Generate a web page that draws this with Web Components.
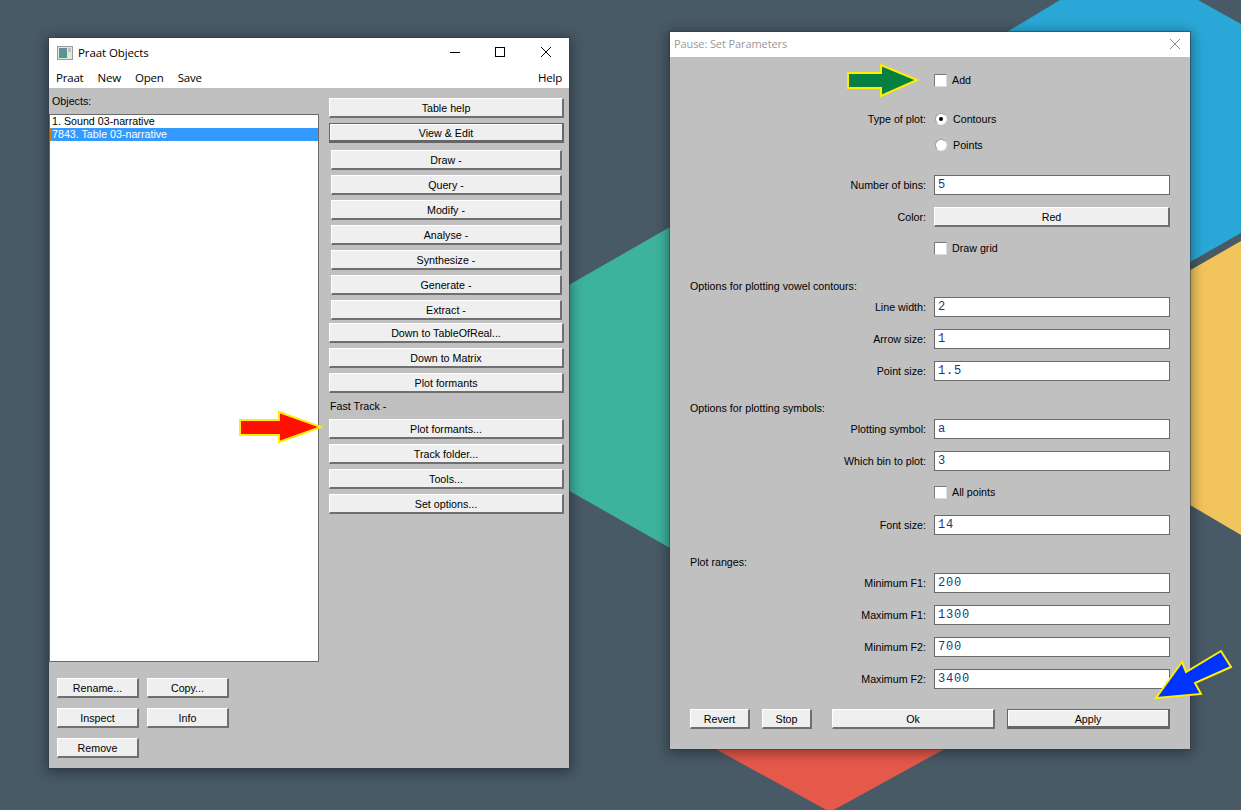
<!DOCTYPE html>
<html>
<head>
<meta charset="utf-8">
<title>Praat</title>
<style>
  html, body { margin: 0; padding: 0; background: #485a66; }
  body { font: 10.7px "Liberation Sans", Arial, sans-serif; color: #000; }
  .win-left { left: 49px; top: 38px; width: 520px; height: 730px; }
  .win-right { left: 670px; top: 32px; width: 520px; height: 717px; }
  .arrow-red { left: 238px; top: 410px; }
  .arrow-green { left: 846px; top: 63px; }
  .arrow-blue { left: 1154px; top: 649px; }
</style>
</head>
<body>
<praat-desktop>
  <praat-window class="win-left" heading="Praat Objects" controls>
    <svg slot="icon" width="16" height="14" viewBox="0 0 16 14">
      <rect x="0.5" y="0.5" width="15" height="13" fill="#e4e4e4" stroke="#9a9a9a"/>
      <rect x="2" y="2" width="8" height="10" fill="#4e9a8c"/>
      <rect x="2" y="2" width="8" height="4" fill="#6f8aa0"/>
      <rect x="11" y="2" width="3" height="4" fill="#b8c8c0"/>
    </svg>
    <praat-menu slot="menu">
      <span>Praat</span><span>New</span><span>Open</span><span>Save</span>
      <span slot="end">Help</span>
    </praat-menu>
    <praat-objects></praat-objects>
  </praat-window>

  <praat-window class="win-right" heading="Pause: Set Parameters" inactive>
    <praat-form></praat-form>
  </praat-window>

  <praat-arrow class="arrow-red" width="85" height="34" fill="#ff1000" points="2,10 41,10 41,2 83,17 41,32 41,25 2,25"></praat-arrow>
  <praat-arrow class="arrow-green" width="73" height="35" fill="#058040" points="2,10 35,10 35,2 71,17 35,33 35,25 2,25"></praat-arrow>
  <praat-arrow class="arrow-blue" width="79" height="51" fill="#0033ff" points="2,49 28,13 32,23 67,2 77,18 41,34 47,45"></praat-arrow>
</praat-desktop>

<script>
'use strict';

(function() {
  const buttonCss = `
    :host {
      display: block;
      height: 20px;
      box-sizing: border-box;
      font: 10.7px "Liberation Sans", Arial, sans-serif;
      color: #000;
    }
    .face {
      box-sizing: border-box;
      height: 100%;
      display: flex;
      align-items: center;
      justify-content: center;
      background: #efefef;
      border-top: 1px solid #fff;
      border-left: 1px solid #fff;
      border-right: 2px solid #6f6f6f;
      border-bottom: 2px solid #6f6f6f;
      padding-top: 1px;
    }
    :host([default]) .face {
      border: 1px solid #666;
      border-right-width: 2px;
      border-bottom-width: 3px;
      box-shadow: inset 1px 1px 0 #fff;
    }
  `;

  class PraatButton extends HTMLElement {
    constructor() {
      super();
      const shadow = this.attachShadow({ mode: 'open' });
      shadow.innerHTML = `<style>${buttonCss}</style><div class="face"><slot></slot></div>`;
    }
  }

  class PraatDesktop extends HTMLElement {
    constructor() {
      super();
      const shadow = this.attachShadow({ mode: 'open' });
      shadow.innerHTML = `
        <style>
          :host {
            display: block;
            position: relative;
            width: 1241px;
            height: 810px;
            overflow: hidden;
            background: #485a66;
          }
          svg { position: absolute; left: 0; top: 0; }
        </style>
        <svg width="1241" height="810" viewBox="0 0 1241 810">
          <polygon fill="#3db39e" points="520,313 670,227 800,227 800,548 670,548 520,463"/>
          <polygon fill="#29a8d8" points="1060,0 1198,0 1241,24 1241,233 1190,262 950,262 950,66"/>
          <polygon fill="#f2c55c" points="1100,322 1241,241 1241,535 1190,505 1100,505"/>
          <polygon fill="#e5594b" points="690,735 830,812 970,735"/>
        </svg>
        <slot></slot>
      `;
    }
  }

  class PraatWindow extends HTMLElement {
    constructor() {
      super();
      const shadow = this.attachShadow({ mode: 'open' });
      const heading = this.getAttribute('heading') || '';
      const controls = this.hasAttribute('controls');
      shadow.innerHTML = `
        <style>
          :host {
            display: flex;
            flex-direction: column;
            position: absolute;
            background: #c0c0c0;
            box-shadow: 0 0 0 1px rgba(50,60,70,.55), 0 2px 12px 2px rgba(0,0,0,.4);
          }
          .top { background: #fff; flex: none; }
          .title {
            display: flex;
            align-items: center;
            height: 30px;
            padding-left: 8px;
            font: 11.5px "Open Sans", sans-serif;
            letter-spacing: -.1px;
            color: #000;
          }
          .heading { flex: 1; padding-bottom: 2px; }
          :host([inactive]) .title {
            height: 25px;
            padding-left: 4px;
            color: #999;
            font-size: 11px;
          }
          ::slotted([slot=icon]) { margin-right: 5px; }
          .caption { display: flex; }
          .caption svg { display: block; }
          .body { flex: 1; min-height: 0; }
        </style>
        <div class="top">
          <div class="title">
            <slot name="icon"></slot>
            <span class="heading">${heading}</span>
            <div class="caption">
              ${controls ? `
              <svg width="46" height="30" viewBox="0 0 46 30"><path d="M2 14.5h10" stroke="#000" fill="none"/></svg>
              <svg width="46" height="30" viewBox="0 0 46 30"><rect x="1.5" y="9.5" width="9" height="9" stroke="#000" fill="none"/></svg>
              <svg width="29" height="30" viewBox="0 0 29 30"><path d="M1 9l10 10M11 9L1 19" stroke="#000" fill="none"/></svg>
              ` : `
              <svg width="20" height="25" viewBox="0 0 20 25"><path d="M0 7l10 10M10 7L0 17" stroke="#8c8c8c" fill="none"/></svg>
              `}
            </div>
          </div>
          <slot name="menu"></slot>
        </div>
        <div class="body"><slot></slot></div>
      `;
    }
  }

  class PraatMenu extends HTMLElement {
    constructor() {
      super();
      const shadow = this.attachShadow({ mode: 'open' });
      shadow.innerHTML = `
        <style>
          :host {
            display: flex;
            justify-content: space-between;
            height: 18px;
            padding: 0 7px 2px;
            align-items: center;
            font: 11.5px "Open Sans", sans-serif;
            letter-spacing: -.2px;
            color: #000;
          }
          .items { display: flex; gap: 14px; }
        </style>
        <div class="items"><slot></slot></div>
        <slot name="end"></slot>
      `;
    }
  }

  class PraatObjects extends HTMLElement {
    constructor() {
      super();
      const shadow = this.attachShadow({ mode: 'open' });
      const upper = ['Draw -', 'Query -', 'Modify -', 'Analyse -', 'Synthesize -', 'Generate -', 'Extract -'];
      shadow.innerHTML = `
        <style>
          :host {
            display: grid;
            grid-template-columns: 270px 235px;
            column-gap: 10px;
            height: 100%;
          }
          .left { display: flex; flex-direction: column; }
          .caption { height: 26px; line-height: 26px; padding-left: 3px; }
          .list {
            box-sizing: border-box;
            height: 548px;
            background: #fff;
            border: 1px solid #6a6a6a;
          }
          .row { height: 13px; line-height: 13px; padding-left: 2px; white-space: nowrap; }
          .row.sel {
            box-sizing: border-box;
            background: #3399ff;
            color: #fff;
            border: 1px dotted #e07b10;
            line-height: 11px;
            padding-left: 1px;
          }
          .bottom {
            display: grid;
            grid-template-columns: 82px 82px;
            gap: 10px 8px;
            margin: 16px 0 0 8px;
          }
          .right { display: flex; flex-direction: column; padding-top: 10px; }
          .right praat-button { margin-top: 5px; }
          .right praat-button:first-child { margin-top: 0; }
          .inset { margin-left: 2px; margin-right: 2px; }
          .right praat-button.gap7 { margin-top: 7px; }
          .right praat-button.gap3 { margin-top: 3px; }
          .label { height: 26px; line-height: 26px; padding-left: 1px; }
          .right praat-button.after-label { margin-top: 0; }
        </style>
        <div class="left">
          <div class="caption">Objects:</div>
          <div class="list">
            <div class="row">1. Sound 03-narrative</div>
            <div class="row sel">7843. Table 03-narrative</div>
          </div>
          <div class="bottom">
            <praat-button>Rename...</praat-button>
            <praat-button>Copy...</praat-button>
            <praat-button>Inspect</praat-button>
            <praat-button>Info</praat-button>
            <praat-button>Remove</praat-button>
          </div>
        </div>
        <div class="right">
          <praat-button>Table help</praat-button>
          <praat-button default>View &amp; Edit</praat-button>
          ${upper.map((item, index) => `
          <praat-button class="inset ${index == 0 ? 'gap7' : ''}">${item}</praat-button>
          `).join('')}
          <praat-button class="gap3">Down to TableOfReal...</praat-button>
          <praat-button>Down to Matrix</praat-button>
          <praat-button>Plot formants</praat-button>
          <div class="label">Fast Track -</div>
          <praat-button class="after-label">Plot formants...</praat-button>
          <praat-button>Track folder...</praat-button>
          <praat-button>Tools...</praat-button>
          <praat-button>Set options...</praat-button>
        </div>
      `;
    }
  }

  class PraatRow extends HTMLElement {
    constructor() {
      super();
      const shadow = this.attachShadow({ mode: 'open' });
      shadow.innerHTML = `
        <style>
          :host {
            display: grid;
            grid-template-columns: 236px 236px;
            column-gap: 8px;
            align-items: center;
            height: 20px;
          }
          .label { text-align: right; }
        </style>
        <div class="label">${this.getAttribute('label') || ''}</div>
        <div><slot></slot></div>
      `;
    }
  }

  class PraatText extends HTMLElement {
    constructor() {
      super();
      const shadow = this.attachShadow({ mode: 'open' });
      shadow.innerHTML = `
        <style>
          :host {
            display: block;
            box-sizing: border-box;
            height: 20px;
            padding-left: 3px;
            background: #fff;
            border: 1px solid #6a6a6a;
            font: 12px/19px "Liberation Mono", "Courier New", monospace;
            letter-spacing: .8px;
            color: #123a80;
          }
        </style>
        <slot></slot>
      `;
    }
  }

  class PraatToggle extends HTMLElement {
    constructor() {
      super();
      const shadow = this.attachShadow({ mode: 'open' });
      shadow.innerHTML = `
        <style>
          :host { display: flex; align-items: center; height: 20px; }
          .box {
            box-sizing: border-box;
            flex: none;
            width: 13px;
            height: 13px;
            margin-right: 5px;
            background: #fff;
            border: 1px solid #7a7a7a;
            border-right-color: #dcdcdc;
            border-bottom-color: #dcdcdc;
          }
          :host([radio]) .box {
            width: 12px;
            height: 12px;
            margin: 0 6px 0 1px;
            border-radius: 50%;
            border: 1px solid #a0a0a0;
            border-right-color: #eee;
            border-bottom-color: #eee;
            display: flex;
            align-items: center;
            justify-content: center;
          }
          :host([radio][checked]) .box::after {
            content: '';
            width: 4px;
            height: 4px;
            border-radius: 50%;
            background: #000;
          }
        </style>
        <div class="box"></div><slot></slot>
      `;
    }
  }

  class PraatForm extends HTMLElement {
    constructor() {
      super();
      const shadow = this.attachShadow({ mode: 'open' });
      const field = (label, value, top) => `
        <praat-row label="${label}" style="margin-top:${top}px"><praat-text>${value}</praat-text></praat-row>`;
      const note = (text, top) => `<div class="note" style="margin-top:${top}px">${text}</div>`;
      shadow.innerHTML = `
        <style>
          :host { display: block; padding: 13px 20px 0; }
          .note { height: 20px; line-height: 20px; }
          .buttons {
            display: grid;
            grid-template-columns: 60px 50px 163px 163px;
            column-gap: 12px;
            margin-top: 20px;
            padding-right: 0;
          }
          .buttons { grid-template-columns: 60px 50px 8px 163px 163px; }
          .buttons .spacer { margin-left: -12px; }
        </style>
        <praat-row><praat-toggle>Add</praat-toggle></praat-row>
        <praat-row label="Type of plot:" style="margin-top:19px"><praat-toggle radio checked>Contours</praat-toggle></praat-row>
        <praat-row style="margin-top:6px"><praat-toggle radio>Points</praat-toggle></praat-row>
        ${field('Number of bins:', '5', 20)}
        <praat-row label="Color:" style="margin-top:12px"><praat-button>Red</praat-button></praat-row>
        <praat-row style="margin-top:11px"><praat-toggle>Draw grid</praat-toggle></praat-row>
        ${note('Options for plotting vowel contours:', 18)}
        ${field('Line width:', '2', 1)}
        ${field('Arrow size:', '1', 12)}
        ${field('Point size:', '1.5', 12)}
        ${note('Options for plotting symbols:', 17)}
        ${field('Plotting symbol:', 'a', 1)}
        ${field('Which bin to plot:', '3', 12)}
        <praat-row style="margin-top:11px"><praat-toggle>All points</praat-toggle></praat-row>
        ${field('Font size:', '14', 13)}
        ${note('Plot ranges:', 17)}
        ${field('Minimum F1:', '200', 1)}
        ${field('Maximum F1:', '1300', 12)}
        ${field('Minimum F2:', '700', 12)}
        ${field('Maximum F2:', '3400', 12)}
        <div class="buttons" style="grid-template-columns:60px 50px 163px 163px;margin-right:-20px">
          <praat-button>Revert</praat-button>
          <praat-button>Stop</praat-button>
          <praat-button style="margin-left:8px;margin-right:-8px">Ok</praat-button>
          <praat-button default style="margin-left:8px;margin-right:-8px">Apply</praat-button>
        </div>
      `;
    }
  }

  class PraatArrow extends HTMLElement {
    constructor() {
      super();
      const shadow = this.attachShadow({ mode: 'open' });
      const w = this.getAttribute('width');
      const h = this.getAttribute('height');
      shadow.innerHTML = `
        <style>
          :host { display: block; position: absolute; width: ${w}px; height: ${h}px; }
          svg { display: block; }
        </style>
        <svg width="${w}" height="${h}" viewBox="0 0 ${w} ${h}">
          <polygon points="${this.getAttribute('points')}" fill="${this.getAttribute('fill')}" stroke="#ffee00" stroke-width="2"/>
        </svg>
      `;
    }
  }

  customElements.define('praat-button', PraatButton);
  customElements.define('praat-desktop', PraatDesktop);
  customElements.define('praat-window', PraatWindow);
  customElements.define('praat-menu', PraatMenu);
  customElements.define('praat-objects', PraatObjects);
  customElements.define('praat-row', PraatRow);
  customElements.define('praat-text', PraatText);
  customElements.define('praat-toggle', PraatToggle);
  customElements.define('praat-form', PraatForm);
  customElements.define('praat-arrow', PraatArrow);
})();
</script>
</body>
</html>
